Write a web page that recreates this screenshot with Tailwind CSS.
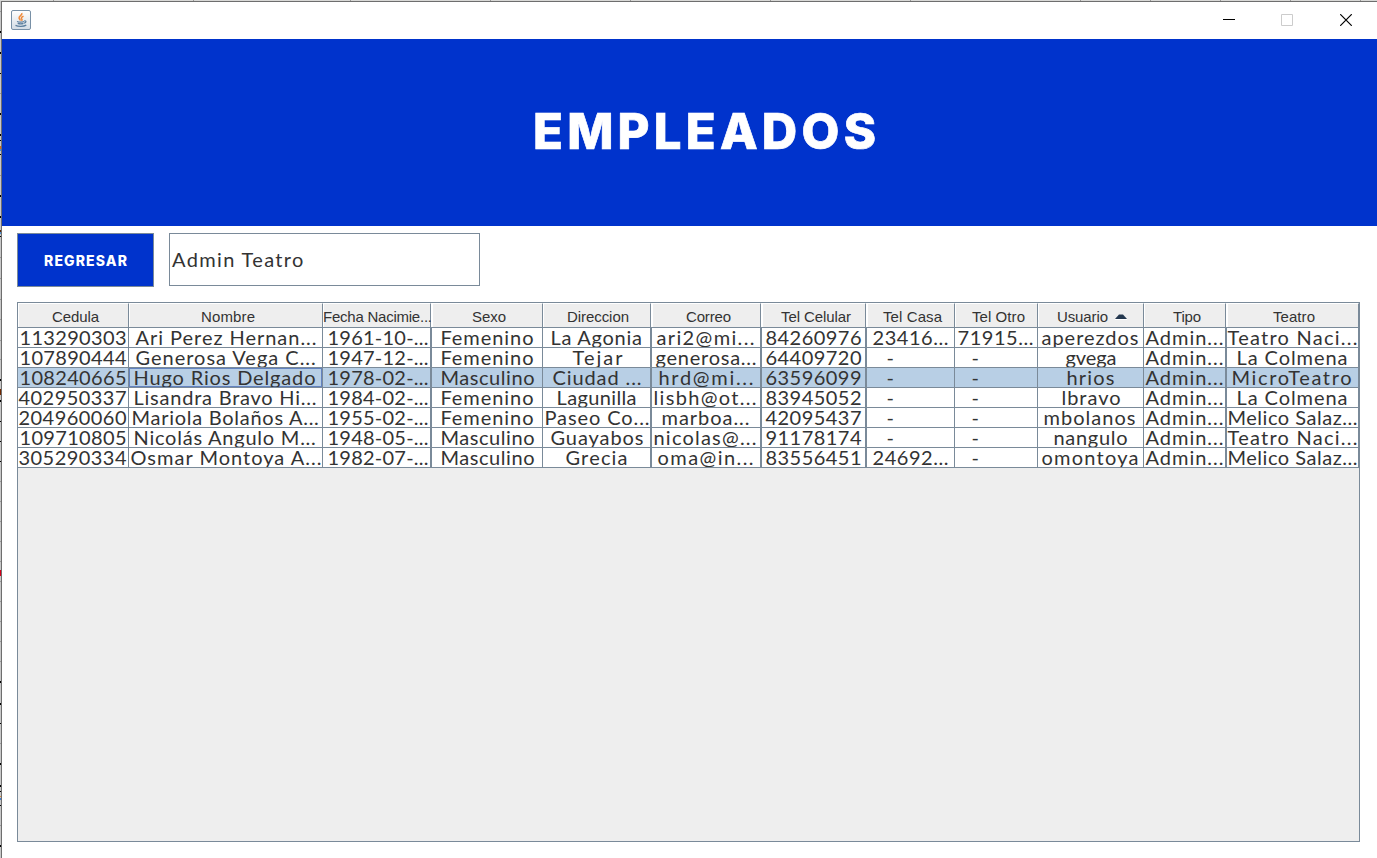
<!DOCTYPE html>
<html lang="es">
<head>
<meta charset="utf-8">
<title>Empleados</title>
<script src="https://cdn.jsdelivr.net/npm/@tailwindcss/browser@4"></script>
</head>
<body class="w-[1377px] h-[858px] overflow-hidden bg-[#c8c8c8] relative font-['Lato',sans-serif] text-[#333]">
<div id="edge" class="absolute left-0 top-0 w-[2px] h-[858px]"></div>
<div id="topedge" class="absolute left-0 top-0 h-px w-[1377px] bg-[#d8d8d6]"></div>
<div class="ml-px mt-px w-[1376px] h-[857px] border-l border-t border-[#6e6e6e] bg-white flex flex-col relative">
  <header class="h-[37px] flex items-center shrink-0">
    <svg class="ml-[9px] mb-px" width="20" height="20" viewBox="0 0 20 20" fill="none">
      <defs><linearGradient id="g" x1="0" y1="0" x2="0" y2="1"><stop offset="0" stop-color="#fff"/><stop offset="1" stop-color="#d3dce5"/></linearGradient></defs>
      <rect x=".5" y=".5" width="19" height="19" rx="1.5" fill="url(#g)" stroke="#7890a6"/>
      <path d="M10.8 3c1 2-3.3 3-2.7 5 .2 1 1 1.500 1.300 2.500M12.500 6.200c-2 1-2.800 1.800-1.700 3 .5.700.2 1.200-.4 1.600" stroke="#ee8a3c" stroke-width="1.500"/>
      <path d="M6 11.500c2 .8 5 .8 7 0M6.700 13.300c2 .7 4 .7 5.800 0M4.500 15.300c3 1.500 8 1.300 10.800-.2M13.300 11c2.200-.6 2.200 1.700-.3 2.200" stroke="#5c7f9e" stroke-width="1.300"/>
    </svg>
    <div class="ml-auto flex items-center mb-px">
      <svg width="12" height="12" viewBox="0 0 12 12" shape-rendering="crispEdges"><path d="M0 5h12v1H0z" fill="#000"/></svg>
      <svg class="ml-[46px]" width="12" height="12" viewBox="0 0 12 12" fill="none"><path d="M.5.5h11v11H.5z" stroke="#ccc"/></svg>
      <svg class="ml-[47px] mr-[25px]" width="12" height="12" viewBox="0 0 12 12"><path d="M.2.2l11.600 11.600M11.800.2L.2 11.800" stroke="#000" stroke-width="1.200"/></svg>
    </div>
  </header>
  <section class="h-[187px] shrink-0 bg-[#0033cc] text-white pt-[58px]">
    <h1 class="pl-[531px] h-[70px] leading-[70px] text-[49px] font-extrabold font-['Inter',sans-serif] [-webkit-text-stroke:0.7px_white] whitespace-nowrap"><span data-w="343" data-font="800 49px Inter">EMPLEADOS</span></h1>
  </section>
  <div class="flex pl-[15px] pt-[7px] h-[76px] shrink-0">
    <button class="w-[137px] h-[54px] border border-[#7a8a99] bg-[#0033cc] text-white text-left pl-[26px] text-[14px] font-extrabold font-['Inter',sans-serif] whitespace-nowrap"><span data-w="83" data-font="800 14px Inter">REGRESAR</span></button>
    <div class="ml-[15px] w-[311px] h-[53px] border border-[#7a8a99] pl-[2px] text-[20px] leading-[50px] whitespace-nowrap"><span data-w="132" data-font="20px Lato">Admin Teatro</span></div>
  </div>
  <main class="ml-[15px] w-[1343px] h-[540px] border border-[#7a8a99] bg-[#eee]">
    <div id="head" class="grid grid-cols-[111px_194px_109px_111px_109px_110px_105px_88px_83px_106px_83px_132px] h-[25px] font-['Liberation_Sans',sans-serif] text-[15px]"></div>
    <div id="rows" class="grid grid-cols-[111px_194px_109px_111px_109px_110px_105px_88px_83px_106px_83px_132px] auto-rows-[20px] text-[20px]"></div>
  </main>
</div>
<script>
// Column starts, and each label as [text, left, right]
const starts=[18,129,323,432,543,652,762,867,955,1038,1144,1227];
const wide=[2,4,5,6,10];
const heads=[["Cedula",52,98],["Nombre",201,254],["Fecha Nacimie...",323,431],["Sexo",472,505],["Direccion",567,628],["Correo",686,730],["Tel Celular",781,850],["Tel Casa",883,941],["Tel Otro",972,1024],["Usuario",1057,1107],["Tipo",1173,1200],["Teatro",1273,1314]];
const A=["Admin...",1146,1223],F=["Femenino",441,533],M=["Masculino",441,534],D=["-",887,894],E=["-",972,979];
const rows=[
[["113290303",20,126],["Ari Perez Hernan...",136,316],["1961-10-...",328,428],F,["La Agonia",551,642],["ari2@mi...",657,754],["84260976",766,861],["23416...",873,948],["71915...",958,1033],["aperezdos",1042,1138],A,["Teatro Naci...",1228,1357]],
[["107890444",20,126],["Generosa Vega C...",136,316],["1947-12-...",328,428],F,["Tejar",573,622],["generosa...",656,756],["64409720",766,861],D,E,["gvega",1066,1116],A,["La Colmena",1237,1347]],
[["108240665",20,126],["Hugo Rios Delgado",134,315],["1978-02-...",328,428],M,["Ciudad ...",553,641],["hrd@mi...",659,753],["63596099",766,861],D,E,["hrios",1067,1114],A,["MicroTeatro",1232,1351]],
[["402950337",19,126],["Lisandra Bravo Hi...",134,316],["1984-02-...",328,428],F,["Lagunilla",557,636],["lisbh@ot...",654,756],["83945052",766,861],D,E,["lbravo",1062,1120],A,["La Colmena",1237,1347]],
[["204960060",19,126],["Mariola Bolaños A...",132,319],["1955-02-...",328,428],F,["Paseo Co...",545,649],["marboa...",662,749],["42095437",766,861],D,E,["mbolanos",1044,1135],A,["Melico Salaz...",1228,1357]],
[["109710805",20,126],["Nicolás Angulo M...",134,316],["1948-05-...",328,428],M,["Guayabos",551,643],["nicolas@...",654,756],["91178174",766,861],D,E,["nangulo",1054,1127],A,["Teatro Naci...",1228,1357]],
[["305290334",19,126],["Osmar Montoya A...",131,322],["1982-07-...",328,428],M,["Grecia",566,627],["oma@in...",658,753],["83556451",766,861],["24692...",873,948],E,["omontoya",1042,1138],A,["Melico Salaz...",1228,1357]]];
const span=(c,i,font,dx)=>`<span data-w="${c[2]-c[1]+1}" data-font="${font}" class="inline-block" style="margin-left:${c[1]-starts[i]+dx}px">${c[0]}</span>`;
const arrow='<svg class="inline-block ml-[7px] mb-[3px]" width="12" height="6" viewBox="0 0 12 6"><path d="M0 5L4 .5h4L12 5z" fill="#24384f"/><path d="M0 5h12v1H0z" fill="#fff"/></svg>';
document.getElementById('head').innerHTML=heads.map((c,i)=>`<div class="flex h-[25px] border-b border-[#7a8a99] overflow-hidden"><div class="flex-1 min-w-0 border-l border-t border-white border-r border-r-[#7a8a99] whitespace-nowrap leading-[26px] h-[24px]">${span(c,i,"15px 'Liberation Sans'",-1)}${i==9?arrow:''}</div>${wide.includes(i)?'<div class="w-px bg-white"></div>':''}</div>`).join('');
document.getElementById('rows').innerHTML=rows.map((r,j)=>r.map((c,i)=>`<div class="${j==2?'bg-[#b8cfe5]':'bg-white'} ${wide.includes(i)?'border-r-2':'border-r'} border-b border-[#7a8a99] overflow-hidden whitespace-nowrap leading-[18px] ${j==2&&i==1?'shadow-[inset_0_0_0_1px_#6382bf]':''}">${span(c,i,'20px Lato',-0.5)}</div>`).join('')).join('');
// Track each label so it fills its intended width
const ctx=document.createElement('canvas').getContext('2d');
document.querySelectorAll('[data-w]').forEach(s=>{
  ctx.font=s.dataset.font;
  const w=ctx.measureText(s.textContent).width,n=s.textContent.length;
  if(n>1)s.style.letterSpacing=((+s.dataset.w-w)/(n-1)).toFixed(3)+'px';
});
// Slivers of the window behind
const put=(y,h,c)=>`<div class="absolute left-0 w-[2px]" style="top:${y}px;height:${h}px;background:${c}"></div>`;
let m='';
[11,93,175,257,278,299,319,340,359,481,501,521,541,561,581,601,621,641,661,743,825].forEach(y=>m+=put(y,1,'#999'));
[31,52,113,134,195,216,379,400,681,703,763,785,845].forEach(y=>m+=put(y,2,'#000'));
[73,140,154,236,421,441,461,723,791,805].forEach(y=>m+=put(y,1,'#000'));
m+=put(146,3,'#d96b18')+put(149,2,'#4a8fd0')+put(230,2,'#5c2608')+put(232,2,'#4a8fd0')+put(389,6,'#702800')+put(570,6,'#d4001a')+put(796,1,'#d98a40')+put(798,2,'#4a80d0');
document.getElementById('edge').innerHTML=m;
document.getElementById('topedge').innerHTML=[53,193,350,490,630,770,910,1080,1150,1220,1290,1360].map(x=>`<div class="absolute top-0 w-px h-px bg-[#999]" style="left:${x}px"></div>`).join('');
</script>
</body>
</html>
